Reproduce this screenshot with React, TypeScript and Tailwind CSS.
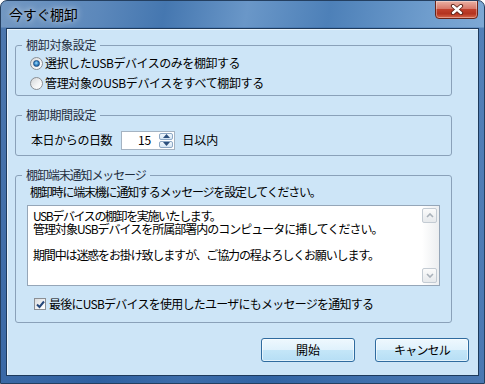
import React from "react";

function Radio({ checked }: { checked?: boolean }) {
  return (
    <div className="w-[13px] h-[13px] rounded-full border border-[#8b8f94] bg-[linear-gradient(135deg,#d4d6d8_0%,#f4f5f6_60%,#ffffff_100%)] flex items-center justify-center shrink-0">
      {checked && (
        <div className="w-[7px] h-[7px] rounded-full bg-[radial-gradient(circle_at_45%_40%,#a8dcf8_0%,#3b8fd0_45%,#124a86_100%)] border border-[#1d4f86]" />
      )}
    </div>
  );
}

function Legend({ children, className = "" }: { children: React.ReactNode; className?: string }) {
  return (
    <legend className={"ml-[-5px] px-[4px] leading-[16px] text-[12px] text-[#1f2d3d] " + className}>
      {children}
    </legend>
  );
}

export default function App() {
  return (
    <div className="w-[485px] h-[384px] flex flex-col overflow-hidden rounded-t-[7px] border border-[#243f60] bg-[linear-gradient(180deg,rgba(0,0,0,0)_0px,rgba(0,0,0,0)_26px,rgba(30,80,150,0.45)_27px,rgba(30,80,150,0.6)_100%),linear-gradient(100deg,#7398c2_0%,#5c88bb_18%,#4577b0_30%,#6a97c8_45%,#4d80b8_60%,#6f9dcd_78%,#8db4dc_100%)] font-['Noto_Sans_CJK_JP','Noto_Sans',sans-serif] text-[12px] text-black">
      {/* title bar */}
      <div className="h-[27px] flex items-start justify-between shrink-0">
        <div className="pl-[8px] pt-[4px] text-[14px] leading-[18px] tracking-[-0.3px] text-black [text-shadow:0_0_6px_rgba(255,255,255,0.9)]">
          今すぐ棚卸
        </div>
        <div className="mr-[6px] w-[43px] h-[19px] mt-[-1px] rounded-b-[4px] border border-[#6b2418] bg-[linear-gradient(180deg,#eab2a4_0%,#d7796a_45%,#c0402c_50%,#b33320_75%,#d8684c_100%)] flex items-center justify-center shadow-[inset_0_0_0_1px_rgba(255,255,255,0.35)]">
          <svg width="14" height="11" viewBox="0 0 14 11">
            <path d="M3 2 L11 9 M11 2 L3 9" stroke="#5a2116" strokeWidth="4.2" strokeLinecap="round" />
            <path d="M3 2 L11 9 M11 2 L3 9" stroke="#ffffff" strokeWidth="2.4" strokeLinecap="round" />
          </svg>
        </div>
      </div>

      {/* content */}
      <div className="flex-1 mx-[5px] mb-[7px] border border-[#1d3a5c] bg-[#cde5f7] flex flex-col shadow-[inset_1px_1px_0_#eaf4fc]">
        {/* group 1 */}
        <fieldset className="ml-[8px] mt-[8px] w-[437px] rounded-[3px] border border-[#8aa1b9] px-[11px] pb-[2px]">
          <Legend className="tracking-[-0.3px]">棚卸対象設定</Legend>
          <div className="h-[20px] flex items-center gap-[2px] ml-[3px]">
            <Radio checked />
            <span className="leading-[16px] tracking-[-0.45px]">選択したUSBデバイスのみを棚卸する</span>
          </div>
          <div className="h-[20px] flex items-center gap-[2px] ml-[3px]">
            <Radio />
            <span className="leading-[16px] tracking-[-0.35px]">管理対象のUSBデバイスをすべて棚卸する</span>
          </div>
        </fieldset>

        {/* group 2 */}
        <fieldset className="ml-[8px] mt-[11px] w-[437px] rounded-[3px] border border-[#8aa1b9] px-[11px] pt-[7px] pb-[5px]">
          <Legend className="tracking-[-0.3px]">棚卸期間設定</Legend>
          <div className="h-[20px] flex items-center ml-[4px]">
            <span className="leading-[16px] tracking-[-0.4px]">本日からの日数</span>
            <div className="ml-[9px] w-[54px] h-[19px] border border-[#a4b3c2] bg-white flex items-stretch">
              <div className="flex-1 flex items-center justify-end pr-[8px] leading-[16px]">15</div>
              <div className="w-[15px] flex flex-col gap-[1px] p-[1px] pl-0">
                <div className="flex-1 rounded-[2px] border border-[#8fa9c6] bg-[linear-gradient(180deg,#f2f8fd_0%,#d5e6f5_100%)] flex items-center justify-center">
                  <svg width="7" height="4" viewBox="0 0 7 4"><path d="M0 4 L3.5 0 L7 4 Z" fill="#2d4f7c" /></svg>
                </div>
                <div className="flex-1 rounded-[2px] border border-[#8fa9c6] bg-[linear-gradient(180deg,#f2f8fd_0%,#d5e6f5_100%)] flex items-center justify-center">
                  <svg width="7" height="4" viewBox="0 0 7 4"><path d="M0 0 L3.5 4 L7 0 Z" fill="#2d4f7c" /></svg>
                </div>
              </div>
            </div>
            <span className="ml-[7px] leading-[16px]">日以内</span>
          </div>
        </fieldset>

        {/* group 3 */}
        <fieldset className="ml-[8px] mt-[11px] w-[437px] rounded-[3px] border border-[#8aa1b9] px-[11px] pb-[9px]">
          <Legend className="tracking-[-1.1px]">棚卸端末通知メッセージ</Legend>
          <div className="h-[18px] flex items-center ml-[3px] leading-[16px] tracking-[-1.2px]">
            棚卸時に端末機に通知するメッセージを設定してください。
          </div>
          <div className="mt-[4px] h-[81px] border border-[#95a6b8] bg-white flex">
            <div className="flex-1 pl-[5px] pt-[3px] leading-[13px] text-[12px]">
              <div className="tracking-[-1.4px]">USBデバイスの棚卸を実施いたします。</div>
              <div className="tracking-[-1px]">管理対象USBデバイスを所属部署内のコンピュータに挿してください。</div>
              <div className="h-[13px]" />
              <div className="tracking-[-1.15px]">期間中は迷惑をお掛け致しますが、ご協力の程よろしくお願いします。</div>
            </div>
            <div className="w-[17px] flex flex-col py-[2px] pr-[2px] bg-[linear-gradient(90deg,#ffffff_0%,#eceef0_100%)]">
              <div className="h-[15px] rounded-[2px] border border-[#c3cbd3] bg-[linear-gradient(180deg,#fbfbfb_0%,#e6e9ec_100%)] flex items-center justify-center">
                <svg width="8" height="5" viewBox="0 0 8 5"><path d="M1 4 L4 1 L7 4" stroke="#a9b1ba" strokeWidth="1.6" fill="none" /></svg>
              </div>
              <div className="flex-1" />
              <div className="h-[15px] rounded-[2px] border border-[#c3cbd3] bg-[linear-gradient(180deg,#fbfbfb_0%,#e6e9ec_100%)] flex items-center justify-center">
                <svg width="8" height="5" viewBox="0 0 8 5"><path d="M1 1 L4 4 L7 1" stroke="#a9b1ba" strokeWidth="1.6" fill="none" /></svg>
              </div>
            </div>
          </div>
          <div className="mt-[9px] h-[18px] flex items-center ml-[7px] gap-[3px]">
            <div className="w-[12px] h-[12px] border border-[#8b8f94] bg-[linear-gradient(135deg,#d9dbdd_0%,#f7f8f9_70%,#ffffff_100%)] flex items-center justify-center shrink-0">
              <svg width="9" height="9" viewBox="0 0 9 9"><path d="M1 4.5 L3.5 7 L8 1.5" stroke="#25477a" strokeWidth="2" fill="none" /></svg>
            </div>
            <span className="leading-[16px] tracking-[-0.75px]">最後にUSBデバイスを使用したユーザにもメッセージを通知する</span>
          </div>
        </fieldset>

        {/* buttons */}
        <div className="mt-[15px] flex justify-end gap-[20px] pr-[9px]">
          <button className="w-[94px] h-[24px] rounded-[3px] border border-[#2f6b9f] bg-[linear-gradient(180deg,#eef8fe_0%,#dff1fc_50%,#c4e6f8_51%,#b6def5_100%)] shadow-[inset_0_0_0_1px_rgba(255,255,255,0.6)] text-[12px] leading-[16px] text-black">
            開始
          </button>
          <button className="w-[94px] h-[24px] rounded-[3px] border border-[#2f6b9f] bg-[linear-gradient(180deg,#eef8fe_0%,#dff1fc_50%,#c4e6f8_51%,#b6def5_100%)] shadow-[inset_0_0_0_1px_rgba(255,255,255,0.6)] text-[12px] leading-[16px] tracking-[-0.8px] text-black">
            キャンセル
          </button>
        </div>
      </div>
    </div>
  );
}
